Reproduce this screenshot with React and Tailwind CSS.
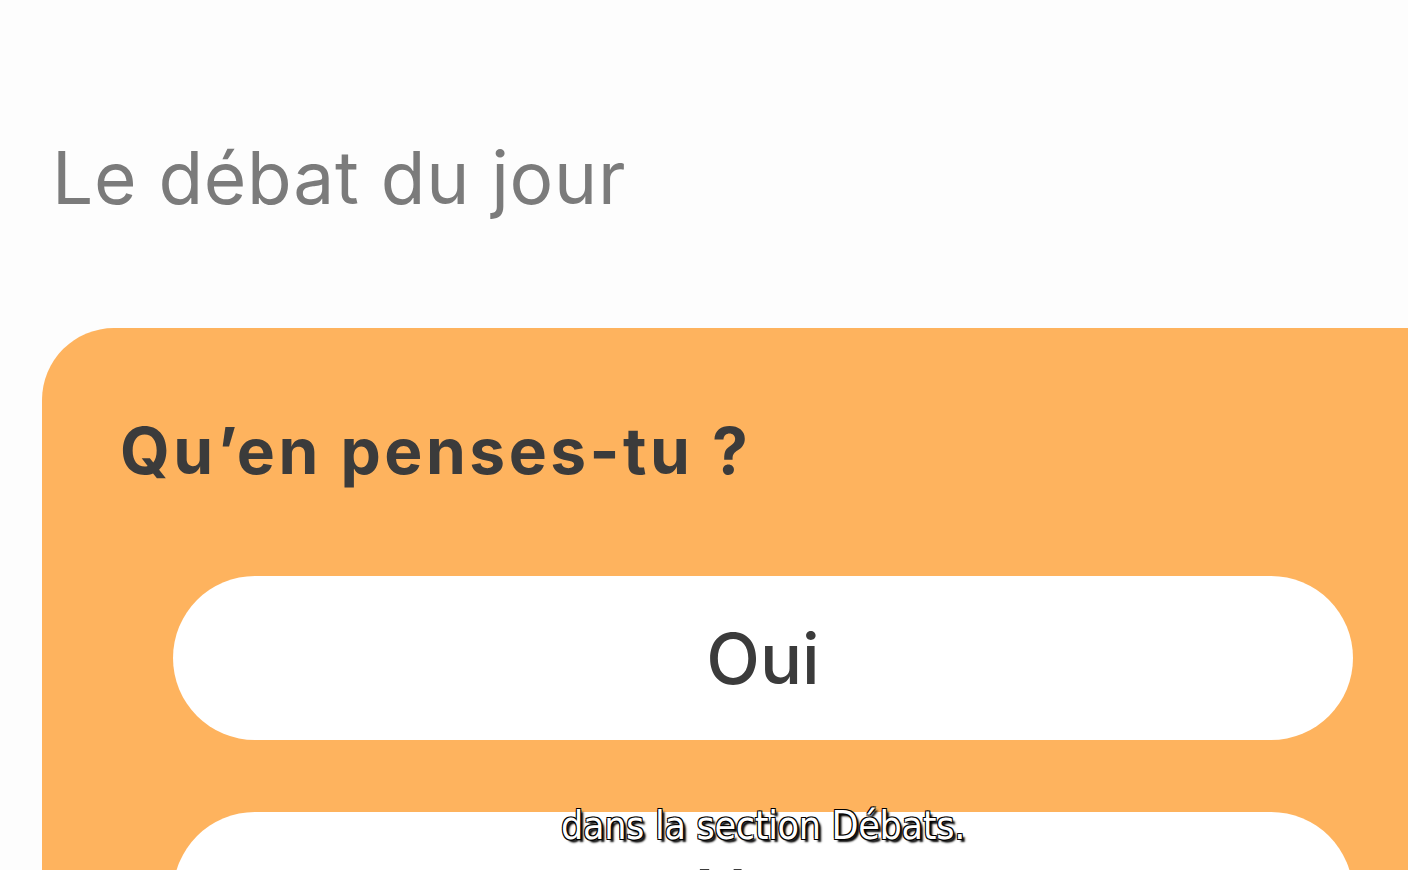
export default function App() {
  return (
    <div className="relative w-[1408px] h-[870px] overflow-hidden bg-[#fdfdfd]" style={{ fontFamily: "Inter, 'Open Sans', sans-serif" }}>
      <div className="pt-[130px] pl-[52px]">
        <h1 className="text-[73px] leading-[96px] text-[#7b7b7b] font-normal tracking-[0.7px]">Le débat du jour</h1>
      </div>
      <div className="ml-[42px] mt-[102px] bg-[#feb35e] rounded-tl-[72px] h-[600px] pt-[83px]">
        <h2 className="pl-[78px] text-[64px] leading-[80px] font-bold text-[#3b3b3b] tracking-[3.5px]">Qu’en penses-tu ?</h2>
        <div className="flex flex-col gap-[72px] pl-[131px] pr-[55px] mt-[85px]">
          <div className="h-[164px] rounded-full bg-white flex items-center justify-center text-[70px] text-[#3b3b3b] font-medium">Oui</div>
          <div className="h-[164px] rounded-full bg-white flex items-center justify-center text-[70px] text-[#3b3b3b] font-medium">Non</div>
        </div>
      </div>
      <div
        className="absolute left-0 right-[-118px] top-[800px] text-center text-white text-[39px] leading-[52px] tracking-[-0.3px]"
        style={{ fontFamily: "'DejaVu Sans Condensed', 'DejaVu Sans', sans-serif", textShadow: "3px 3px 2px #000, -1px -1px 0 #000, 1px -1px 0 #000, -1px 1px 0 #000, 1px 1px 0 #000" }}
      >
        dans la section Débats.
      </div>
    </div>
  );
}
